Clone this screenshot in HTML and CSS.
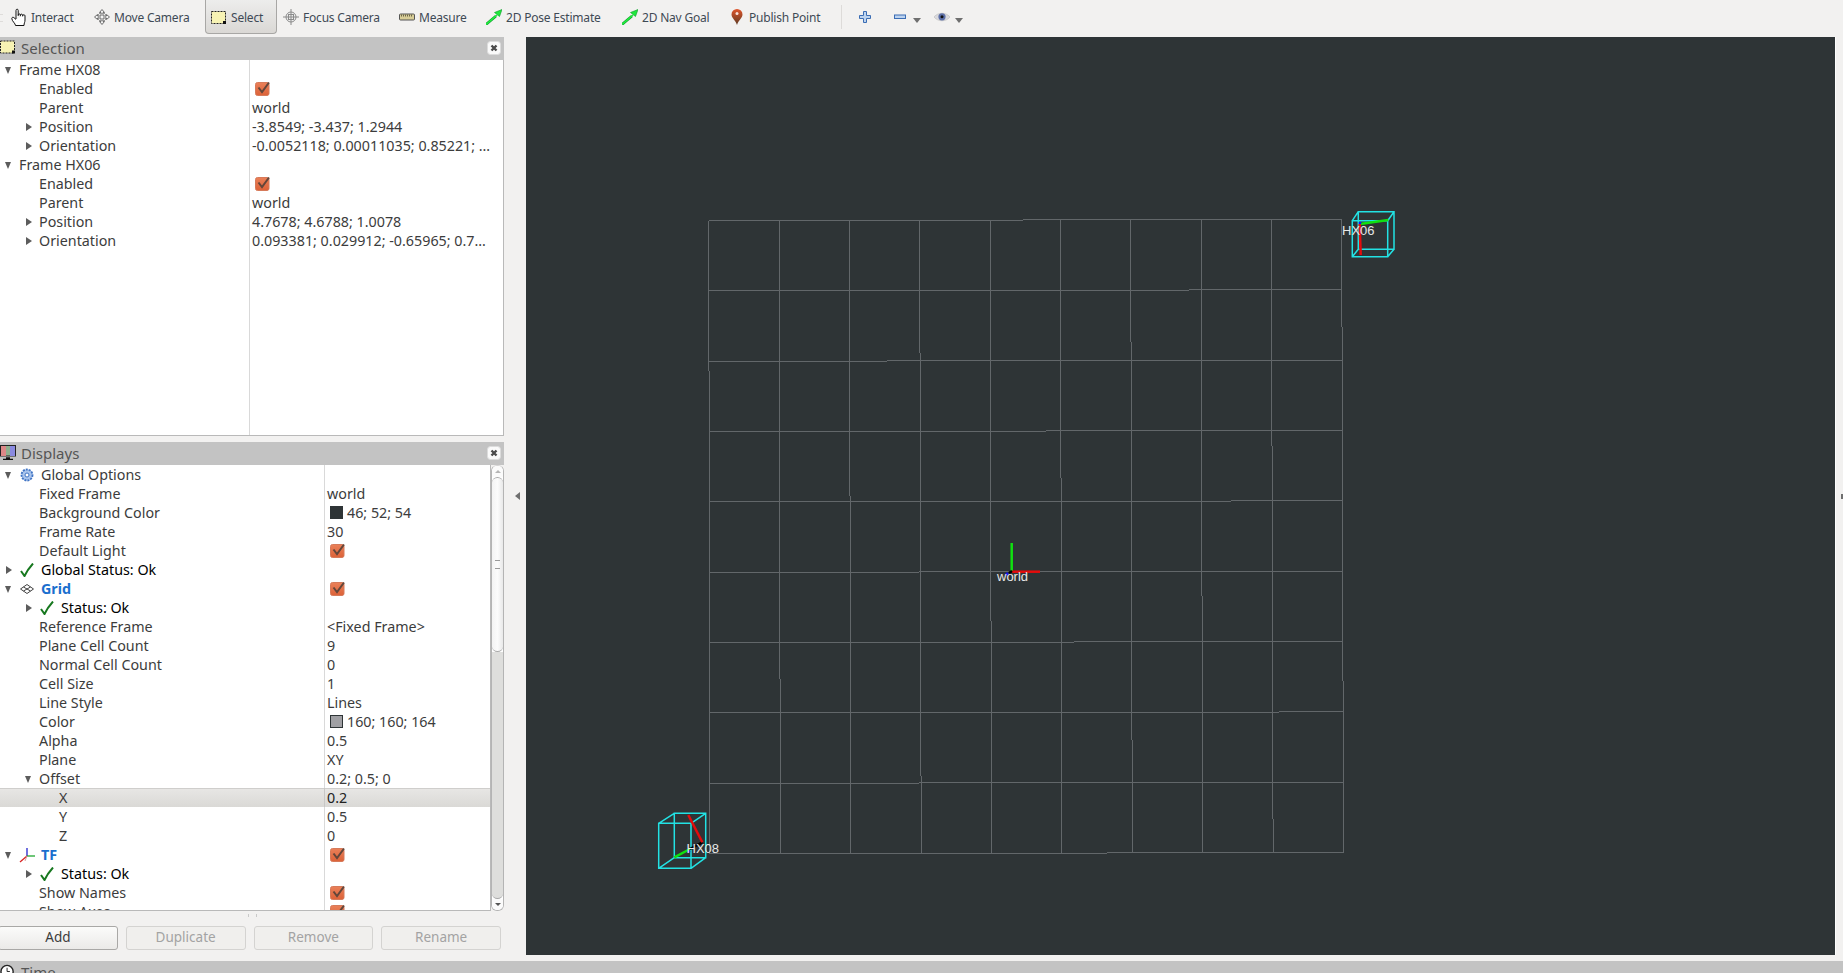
FILE: index.html
```html
<!DOCTYPE html>
<html lang="en">
<head>
    <meta charset="UTF-8">
    <meta name="viewport" content="width=device-width, initial-scale=1.0">
    <title>RViz</title>
    <link rel="stylesheet" href="styles.css">
</head>
<body>

<svg class="defs" aria-hidden="true">
    <symbol id="ic-check" viewBox="0 0 15 15">
        <defs><linearGradient id="chk" x1="0" y1="0" x2="0" y2="1"><stop offset="0" stop-color="#ea8058"/><stop offset="1" stop-color="#dc6238"/></linearGradient></defs>
        <rect x="0.500" y="1.500" width="13.500" height="13" rx="2" fill="url(#chk)" stroke="#d67a5a"/>
        <path d="M3.500 6.500l3.500 4.500 7-9.500" fill="none" stroke="#63463a" stroke-width="2"/>
    </symbol>
    <symbol id="ic-ok" viewBox="0 0 14 14">
        <path d="M1 8l3.500 5c2-4.500 4.500-8 8.500-12.500" fill="none" stroke="#17781f" stroke-width="2"/>
    </symbol>
    <symbol id="ic-close" viewBox="0 0 14 14">
        <rect x="0.500" y="0.500" width="13" height="13" rx="3" fill="#fafafa" stroke="#dcdcdc"/>
        <path d="M4.500 4.500l5 5M9.500 4.500l-5 5" stroke="#4a4a4a" stroke-width="2.400"/>
    </symbol>
    <symbol id="ic-select" viewBox="0 0 16 14">
        <rect x="0.500" y="0.500" width="14" height="12" fill="#f7f3b4" stroke="#222" stroke-dasharray="2 1"/>
        <rect x="12" y="10" width="3" height="3" fill="#111"/>
    </symbol>
    <symbol id="ic-goal" viewBox="0 0 16 16">
        <path d="M0 15.500L10 7" stroke="#0c9a28" stroke-width="2.600"/>
        <path d="M8.500 3.500L16 .5l-2.500 7z" fill="#1fe83c" stroke="#0c9a28" stroke-width="0.600"/>
        <path d="M0 15.500L11 6" stroke="#22f040" stroke-width="1.500"/>
    </symbol>
</svg>

<div class="toolbar">
    <span class="grip"></span>
    <div class="tool t-interact">
        <svg class="icon icon-hand" viewBox="0 0 16 18"><path d="M5 11V2.500c0-1.800 2.200-1.800 2.200 0V8M7.200 7c0-1.400 2.200-1.400 2.200 0v1.200M9.400 7.200c0-1.400 2.200-1.400 2.200 0v1.200M11.600 7.800c0-1.400 2.400-1.400 2.400 0V12c0 2.400-1 3-1 5.500H4.500C4.500 15.500.8 13 .8 10.500c0-1.200 1.200-1.600 2.200-.8L5 11.500" fill="#fff" stroke="#111"/></svg>
        <span>Interact</span>
    </div>
    <div class="tool t-move">
        <svg class="icon" viewBox="0 0 16 16"><path d="M8 .5l2.500 3H9v3.500h3.500V5.500l3 2.500-3 2.500V9H9v3.500h1.500L8 15.500l-2.500-3H7V9H3.500v1.500L.5 8l3-2.500V7H7V3.500H5.500z" fill="#f4f4f4" stroke="#6d6d6d"/><path d="M5 4.500h6M5 11.500h6M4.500 5v6M11.500 5v6" stroke="#9a9a9a" fill="none"/></svg>
        <span>Move Camera</span>
    </div>
    <div class="tool t-select">
        <svg class="icon icon-low"><use href="#ic-select"/></svg>
        <span>Select</span>
    </div>
    <div class="tool t-focus">
        <svg class="icon" viewBox="0 0 16 16"><circle cx="8" cy="8" r="5" fill="#eee" stroke="#8a8a8a"/><path d="M8 0v16M0 8h16M5 5.500h6M5 10.500h6M5.500 5v6M10.500 5v6" stroke="#8a8a8a" fill="none"/></svg>
        <span>Focus Camera</span>
    </div>
    <div class="tool t-measure">
        <svg class="icon" viewBox="0 0 16 16"><rect x="0.500" y="5" width="15" height="6" rx="1" fill="#d8cd97" stroke="#555"/><path d="M2.500 5.500v2M4.500 5.500v2M6.500 5.500v2M8.500 5.500v2M10.500 5.500v2M12.500 5.500v2" stroke="#6a6547"/></svg>
        <span>Measure</span>
    </div>
    <div class="tool t-pose">
        <svg class="icon"><use href="#ic-goal"/></svg>
        <span>2D Pose Estimate</span>
    </div>
    <div class="tool t-nav">
        <svg class="icon"><use href="#ic-goal"/></svg>
        <span>2D Nav Goal</span>
    </div>
    <div class="tool t-publish">
        <svg class="icon icon-pin" viewBox="0 0 12 16"><defs><linearGradient id="pin" x1="0" y1="0" x2="0" y2="1"><stop offset="0" stop-color="#e0552c"/><stop offset="1" stop-color="#5d3a22"/></linearGradient></defs><path d="M6 16C4.500 11 .5 9 .5 5.500a5.500 5.500 0 0 1 11 0C11.500 9 7.500 11 6 16z" fill="url(#pin)"/><circle cx="6" cy="4.500" r="1.500" fill="#f6e3dc"/></svg>
        <span>Publish Point</span>
    </div>
    <span class="tool-sep"></span>
    <svg class="icon-sm plus" viewBox="0 0 12 12"><path d="M4.500.5h3v4h4v3h-4v4h-3v-4h-4v-3h4z" fill="#bcd3ef" stroke="#3b6db4"/></svg>
    <svg class="icon-sm minus" viewBox="0 0 12 12"><rect x="0.500" y="4" width="11" height="3.500" fill="#bcd3ef" stroke="#3b6db4"/></svg>
    <span class="drop"></span>
    <svg class="icon eye" viewBox="0 0 16 16"><path d="M0 8c4-5 12-5 16 0-4 5-12 5-16 0z" fill="#d9d9dd" stroke="#bbb" stroke-width="0.600"/><circle cx="8" cy="7.800" r="3.600" fill="#5c6fa8"/><circle cx="8" cy="7.800" r="1.500" fill="#111"/></svg>
    <span class="drop drop-eye"></span>
</div>

<div class="main">
    <div class="dock">
        <div class="panel selection-panel">
            <div class="panel-head">
                <svg class="head-icon"><use href="#ic-select"/></svg>
                <span class="head-title">Selection</span>
                <svg class="close"><use href="#ic-close"/></svg>
            </div>
            <div class="tree sel-tree">
                <div class="row"><div class="name d0"><i class="tw open"></i>Frame HX08</div><div class="value"></div></div>
                <div class="row"><div class="name d1"><i class="tw"></i>Enabled</div><div class="value"><svg class="check"><use href="#ic-check"/></svg></div></div>
                <div class="row"><div class="name d1"><i class="tw"></i>Parent</div><div class="value">world</div></div>
                <div class="row"><div class="name d1"><i class="tw closed"></i>Position</div><div class="value">-3.8549; -3.437; 1.2944</div></div>
                <div class="row"><div class="name d1"><i class="tw closed"></i>Orientation</div><div class="value">-0.0052118; 0.00011035; 0.85221; …</div></div>
                <div class="row"><div class="name d0"><i class="tw open"></i>Frame HX06</div><div class="value"></div></div>
                <div class="row"><div class="name d1"><i class="tw"></i>Enabled</div><div class="value"><svg class="check"><use href="#ic-check"/></svg></div></div>
                <div class="row"><div class="name d1"><i class="tw"></i>Parent</div><div class="value">world</div></div>
                <div class="row"><div class="name d1"><i class="tw closed"></i>Position</div><div class="value">4.7678; 4.6788; 1.0078</div></div>
                <div class="row"><div class="name d1"><i class="tw closed"></i>Orientation</div><div class="value">0.093381; 0.029912; -0.65965; 0.7…</div></div>
                <div class="row filler"><div class="name"></div><div class="value"></div></div>
            </div>
        </div>

        <div class="panel displays-panel">
            <div class="panel-head">
                <svg class="head-icon" viewBox="0 0 16 15"><rect x="0.500" y="0.500" width="15" height="10.500" fill="#8fb08f" stroke="#222"/><rect x="1" y="1" width="5" height="10" fill="#d88"/><rect x="10" y="1" width="5" height="10" fill="#8a8ae0"/><path d="M6 13h4M3 14.500h10" stroke="#111" stroke-width="1.400"/></svg>
                <span class="head-title">Displays</span>
                <svg class="close"><use href="#ic-close"/></svg>
            </div>
            <div class="displays-body">
                <div class="tree disp-tree">
                    <div class="row"><div class="name d0"><i class="tw open"></i><svg class="ricon" viewBox="0 0 14 14"><circle cx="7" cy="7" r="5.500" fill="#a9c4ec" stroke="#3f73c4" stroke-width="1.800" stroke-dasharray="2 1"/><circle cx="7" cy="7" r="2" fill="#fff" stroke="#3f73c4"/></svg>Global Options</div><div class="value"></div></div>
                    <div class="row"><div class="name d1"><i class="tw"></i>Fixed Frame</div><div class="value">world</div></div>
                    <div class="row"><div class="name d1"><i class="tw"></i>Background Color</div><div class="value"><span class="swatch bg-swatch"></span>46; 52; 54</div></div>
                    <div class="row"><div class="name d1"><i class="tw"></i>Frame Rate</div><div class="value">30</div></div>
                    <div class="row"><div class="name d1"><i class="tw"></i>Default Light</div><div class="value"><svg class="check"><use href="#ic-check"/></svg></div></div>
                    <div class="row"><div class="name d0 status"><i class="tw closed"></i><svg class="ricon"><use href="#ic-ok"/></svg>Global Status: Ok</div><div class="value"></div></div>
                    <div class="row"><div class="name d0 display-name"><i class="tw open"></i><svg class="ricon" viewBox="0 0 14 14"><path d="M7 2.500L13.500 7 7 11.500.5 7zM3.500 5l7 4M10.500 5l-7 4" fill="#fff" stroke="#444"/></svg>Grid</div><div class="value"><svg class="check"><use href="#ic-check"/></svg></div></div>
                    <div class="row"><div class="name d1 status"><i class="tw closed"></i><svg class="ricon"><use href="#ic-ok"/></svg>Status: Ok</div><div class="value"></div></div>
                    <div class="row"><div class="name d1"><i class="tw"></i>Reference Frame</div><div class="value">&lt;Fixed Frame&gt;</div></div>
                    <div class="row"><div class="name d1"><i class="tw"></i>Plane Cell Count</div><div class="value">9</div></div>
                    <div class="row"><div class="name d1"><i class="tw"></i>Normal Cell Count</div><div class="value">0</div></div>
                    <div class="row"><div class="name d1"><i class="tw"></i>Cell Size</div><div class="value">1</div></div>
                    <div class="row"><div class="name d1"><i class="tw"></i>Line Style</div><div class="value">Lines</div></div>
                    <div class="row"><div class="name d1"><i class="tw"></i>Color</div><div class="value"><span class="swatch grid-swatch"></span>160; 160; 164</div></div>
                    <div class="row"><div class="name d1"><i class="tw"></i>Alpha</div><div class="value">0.5</div></div>
                    <div class="row"><div class="name d1"><i class="tw"></i>Plane</div><div class="value">XY</div></div>
                    <div class="row"><div class="name d1"><i class="tw open"></i>Offset</div><div class="value">0.2; 0.5; 0</div></div>
                    <div class="row current"><div class="name d2"><i class="tw"></i>X</div><div class="value">0.2</div></div>
                    <div class="row"><div class="name d2"><i class="tw"></i>Y</div><div class="value">0.5</div></div>
                    <div class="row"><div class="name d2"><i class="tw"></i>Z</div><div class="value">0</div></div>
                    <div class="row"><div class="name d0 display-name"><i class="tw open"></i><svg class="ricon ricon-tf" viewBox="0 0 16 16"><path d="M8 9V1" stroke="#2222cc" stroke-width="1.300"/><path d="M8 9h8" stroke="#1fa82f" stroke-width="1.300"/><path d="M8 9l-7 6" stroke="#d82222" stroke-width="1.300"/><path d="M8 9l-2 5" stroke="#d8a0a0"/></svg>TF</div><div class="value"><svg class="check"><use href="#ic-check"/></svg></div></div>
                    <div class="row"><div class="name d1 status"><i class="tw closed"></i><svg class="ricon"><use href="#ic-ok"/></svg>Status: Ok</div><div class="value"></div></div>
                    <div class="row"><div class="name d1"><i class="tw"></i>Show Names</div><div class="value"><svg class="check"><use href="#ic-check"/></svg></div></div>
                    <div class="row"><div class="name d1"><i class="tw"></i>Show Axes</div><div class="value"><svg class="check"><use href="#ic-check"/></svg></div></div>
                </div>
                <div class="scrollbar">
                    <div class="sb-up"></div>
                    <div class="sb-thumb"><span class="sb-grip"></span></div>
                    <div class="sb-track"></div>
                    <div class="sb-down"></div>
                </div>
            </div>
            <div class="hsplit"><span class="hsplit-grip"></span></div>
            <div class="buttons">
                <button class="btn btn-add">Add</button>
                <button class="btn" disabled>Duplicate</button>
                <button class="btn" disabled>Remove</button>
                <button class="btn" disabled>Rename</button>
            </div>
        </div>
    </div>

    <div class="vsplit"><span class="arrow-left"></span></div>

    <div class="viewport">
        <svg class="scene" viewBox="526 37 1309 918">
            <path class="grid-lines" d="M708.700 220.700L1341.700 219.300M708.900 291L1341.900 289.700M709 361.400L1342.100 360M709.100 431.700L1342.300 430.400M709.300 502L1342.500 500.800M709.400 572.400L1342.700 571.200M709.600 642.700L1342.900 641.500M709.700 713L1343.100 711.900M709.900 783.400L1343.300 782.200M710 853.700L1343.500 852.600M708.700 220.700L710 853.700M779 220.500L780.400 853.600M849.400 220.400L850.800 853.500M919.700 220.200L921.200 853.300M990 220L991.600 853.200M1060.400 219.900L1061.900 853.100M1130.700 219.800L1132.300 853M1201 219.600L1202.700 852.800M1271.400 219.500L1273.100 852.700M1341.700 219.300L1343.500 852.600"/>

            <path class="axis green" d="M1011.700 543V572"/>
            <path class="axis red" d="M1012 571.700H1040"/>
            <path class="axis blue" d="M1006 575l2-2"/>
            <path class="axis black" d="M1009 573l3-2"/>
            <text class="label" x="997" y="581">world</text>

            <path class="cube" d="M1352.300 220.700H1387.700V256.700H1352.300ZM1358.300 211.700H1394V249.300H1358.300ZM1352.300 220.700L1358.300 211.700M1387.700 220.700L1394 211.700M1387.700 256.700L1394 249.300M1352.300 256.700L1358.300 249.300"/>
            <path class="axis green" d="M1360 224L1388.300 220"/>
            <path class="axis red" d="M1359.700 224L1360.700 255"/>
            <path class="axis blue" d="M1360 224v-2"/>
            <text class="label" x="1342" y="234.500">HX06</text>

            <path class="cube" d="M658.700 823.300H691V868.300H658.700ZM674.300 813.300H705.700V857.700H674.300ZM658.700 823.300L674.300 813.300M691 823.300L705.700 813.300M691 868.300L705.700 857.700M658.700 868.300L674.300 857.700"/>
            <path class="axis green" d="M690 849L674.300 857.300"/>
            <path class="axis black" d="M702.300 842.300L690 849"/>
            <path class="axis red" d="M702.300 842.300L688.300 815"/>
            <path class="axis blue" d="M688 852l2-1"/>
            <text class="label" x="686.500" y="852.500">HX08</text>
        </svg>
    </div>

    <div class="right-edge"><span class="arrow-right"></span></div>
</div>

<div class="time-panel">
    <div class="panel-head">
        <svg class="head-icon" viewBox="0 0 16 16"><circle cx="7" cy="8" r="6.500" fill="#fff" stroke="#222" stroke-width="1.500"/><path d="M7 4v4h3" stroke="#222" fill="none"/></svg>
        <span class="head-title">Time</span>
    </div>
</div>

</body>
</html>
```

FILE: styles.css
```css
html, body {
    height: 100%;
}

body {
    margin: 0;
    height: 973px;
    overflow: hidden;
    background-color: #f2f1f0;
    font-family: "Noto Sans", "Open Sans", sans-serif;
    font-size: 14.300px;
    color: #3c3c3c;
}

.defs {
    position: absolute;
    width: 0;
    height: 0;
}

/* toolbar */
.toolbar {
    display: flex;
    align-items: flex-start;
    height: 37px;
}

.grip {
    width: 3px;
    height: 8px;
    margin-top: 14px;
    border-top: 1px solid #dedcda;
    border-bottom: 1px solid #dedcda;
    box-sizing: border-box;
}

.tool {
    display: flex;
    align-items: center;
    gap: 4px;
    height: 34px;
    padding-left: 10px;
    box-sizing: border-box;
    white-space: nowrap;
    font-size: 12px;
    letter-spacing: -0.200px;
    color: #3f4a55;
}

.icon {
    width: 16px;
    height: 16px;
    flex: none;
}

.icon-hand {
    height: 18px;
}

.icon-low {
    margin-top: 2px;
}

.icon-pin {
    width: 12px;
    margin-right: 2px;
}

.t-interact { width: 81px; padding-left: 8px; }
.t-move { width: 121px; }
.t-focus { width: 112px; padding-left: 6px; }
.t-measure { width: 87px; }
.t-pose { width: 136px; }
.t-nav { width: 109px; }
.t-publish { width: 120px; }

.t-select {
    width: 72px;
    padding-left: 5px;
    background: linear-gradient(#ededec, #dad8d5);
    border: 1px solid #a8a7a5;
    border-top: 0;
    border-radius: 0 0 4px 4px;
}

.t-select span {
    margin-top: 2px;
}

.tool-sep {
    width: 1px;
    height: 24px;
    margin-top: 5px;
    background-color: #dddbd9;
}

.icon-sm {
    width: 12px;
    height: 12px;
    margin-top: 11px;
}

.plus {
    margin-left: 17px;
}

.minus {
    margin-left: 23px;
}

.drop {
    margin: 18px 0 0 7px;
    border-top: 5px solid #6f6f6f;
    border-left: 4px solid transparent;
    border-right: 4px solid transparent;
}

.eye {
    margin: 9px 0 0 13px;
}

.drop-eye {
    margin-left: 5px;
}

/* main area */
.main {
    display: flex;
    height: 918px;
}

.dock {
    display: flex;
    flex-direction: column;
    width: 504px;
    flex: none;
}

.panel {
    display: flex;
    flex-direction: column;
}

.selection-panel {
    height: 399px;
    margin-bottom: 6px;
}

.displays-panel {
    flex: 1;
    min-height: 0;
}

.panel-head {
    display: flex;
    align-items: center;
    flex: none;
    height: 23px;
    box-sizing: border-box;
    padding-bottom: 2px;
    background-color: #c3c3c3;
    color: #555;
    font-size: 15px;
}

.head-icon {
    width: 16px;
    height: 15px;
    flex: none;
    margin-right: 5px;
}

.head-title {
    flex: 1;
}

.close {
    width: 14px;
    height: 14px;
    margin-right: 3px;
    flex: none;
}

/* property tree */
.tree {
    flex: 1;
    display: flex;
    flex-direction: column;
    min-height: 0;
    overflow: hidden;
    background-color: #fff;
    box-sizing: border-box;
}

.sel-tree {
    border-right: 1px solid #b9b9b9;
    border-bottom: 1px solid #b9b9b9;
}

.row {
    display: flex;
    flex: none;
    height: 19px;
    line-height: 19px;
    white-space: nowrap;
}

.row.filler {
    flex: 1;
}

.name {
    display: flex;
    align-items: center;
    box-sizing: border-box;
    flex: none;
    overflow: hidden;
}

.sel-tree .name { width: 249px; }
.disp-tree .name { width: 324px; }

.value {
    flex: 1;
    display: flex;
    align-items: center;
    min-width: 0;
    padding-left: 2px;
    border-left: 1px solid #d9d9d9;
    overflow: hidden;
}

.d0 { padding-left: 5px; }
.d1 { padding-left: 25px; }
.d2 { padding-left: 45px; }

.tw {
    width: 14px;
    height: 0;
    flex: none;
    position: relative;
}

/* the tree's expand triangles */
.tw.open::before {
    content: "";
    position: absolute;
    left: 0;
    top: -3px;
    border-top: 7px solid #5c5c5c;
    border-left: 3.500px solid transparent;
    border-right: 3.500px solid transparent;
}

.tw.closed::before {
    content: "";
    position: absolute;
    left: 1px;
    top: -4px;
    border-left: 6px solid #5c5c5c;
    border-top: 4px solid transparent;
    border-bottom: 4px solid transparent;
}

.ricon {
    width: 14px;
    height: 14px;
    flex: none;
    margin: 0 7px 0 1px;
}

.ricon-tf {
    width: 16px;
    height: 16px;
    margin: 0 6px 0 0;
}

.check {
    width: 15px;
    height: 15px;
    flex: none;
    margin-left: 3px;
}

.swatch {
    width: 13px;
    height: 13px;
    flex: none;
    margin: 0 4px 0 3px;
    box-sizing: border-box;
    border: 1px solid #2e3436;
}

.bg-swatch { background-color: #2e3436; }
.grid-swatch { background-color: #a0a0a4; }

.status {
    color: #000;
}

.display-name {
    color: #1a6fce;
    font-weight: 700;
}

.current {
    background: linear-gradient(#e8e7e5, #dad9d6);
    box-shadow: inset 0 1px 0 #cfcecc;
}

.current .value {
    border-left-color: #c8c7c5;
    color: #222;
}

/* displays body with its scrollbar */
.displays-body {
    display: flex;
    height: 446px;
    flex: none;
}

.disp-tree {
    border-bottom: 1px solid #b9b9b9;
    border-right: 1px solid #b9b9b9;
}

.scrollbar {
    display: flex;
    flex-direction: column;
    width: 13px;
    flex: none;
    box-sizing: border-box;
    border: 1px solid #b4b4b4;
    border-top-color: #d4d4d4;
    border-radius: 6px;
    background-color: #fff;
    overflow: hidden;
}

.sb-up,
.sb-down {
    display: flex;
    align-items: center;
    justify-content: center;
    height: 11px;
    flex: none;
    background-color: #fbfbfb;
}

.sb-up::before {
    content: "";
    border-bottom: 3px solid #b5b5b5;
    border-left: 3px solid transparent;
    border-right: 3px solid transparent;
}

.sb-down::before {
    content: "";
    border-top: 3px solid #555;
    border-left: 3px solid transparent;
    border-right: 3px solid transparent;
}

.sb-thumb {
    display: flex;
    align-items: center;
    justify-content: center;
    height: 175px;
    flex: none;
    box-sizing: border-box;
    background: linear-gradient(90deg, #f3f3f3, #fbfbfb 50%, #e9e9e9);
    border: 1px solid #a8a8a8;
    border-width: 1px 0;
    border-radius: 6px;
}

.sb-grip {
    width: 5px;
    height: 7px;
    border-top: 1px solid #999;
    border-bottom: 1px solid #999;
}

.sb-track {
    flex: 1;
    background-color: #dededc;
    border-bottom: 1px solid #a8a8a8;
    border-radius: 0 0 6px 6px;
}

.hsplit {
    display: flex;
    justify-content: center;
    height: 15px;
    flex: none;
}

.hsplit-grip {
    width: 7px;
    height: 3px;
    margin-top: 3px;
    border-left: 1px solid #c9c9c9;
    border-right: 1px solid #c9c9c9;
}

.buttons {
    display: flex;
    gap: 8px;
    margin-left: -2px;
    width: 503px;
}

.btn {
    flex: 1;
    height: 24px;
    padding: 0 0 2px;
    box-sizing: border-box;
    font-family: inherit;
    font-size: 13.500px;
    color: #3c3c3c;
    background: linear-gradient(#fbfbfa, #ebeae8);
    border: 1px solid #a9a8a6;
    border-radius: 3px;
}

.btn:disabled {
    color: #a3a3a3;
    background: #f0efed;
    border-color: #d4d3d1;
}

.vsplit {
    display: flex;
    align-items: center;
    width: 22px;
    flex: none;
}

.arrow-left {
    margin-left: 11px;
    border-right: 5px solid #6f6f6f;
    border-top: 4px solid transparent;
    border-bottom: 4px solid transparent;
}

/* 3D view */
.viewport {
    flex: 1;
    min-width: 0;
    background-color: #2e3436;
}

.scene {
    display: block;
    width: 100%;
    height: 100%;
}

.grid-lines {
    fill: none;
    stroke: #62676a;
    stroke-width: 1;
    shape-rendering: crispEdges;
}

.cube {
    fill: none;
    stroke: #22e2e4;
    stroke-width: 1.500;
}

.axis {
    fill: none;
    stroke-width: 2.500;
}

.green { stroke: #10e010; }
.red { stroke: #e40c0c; }
.blue { stroke: #1010f0; }
.black { stroke: #000; }

.label {
    fill: #e8e8e8;
    font-family: "Liberation Sans", sans-serif;
    font-size: 13px;
}

.right-edge {
    display: flex;
    align-items: center;
    justify-content: flex-end;
    width: 8px;
    flex: none;
    box-sizing: border-box;
    border-left: 1px solid #fdfdfd;
}

.arrow-right {
    width: 2px;
    height: 5px;
    background-color: #6f6f6f;
}

.time-panel {
    margin-top: 6px;
}
```
